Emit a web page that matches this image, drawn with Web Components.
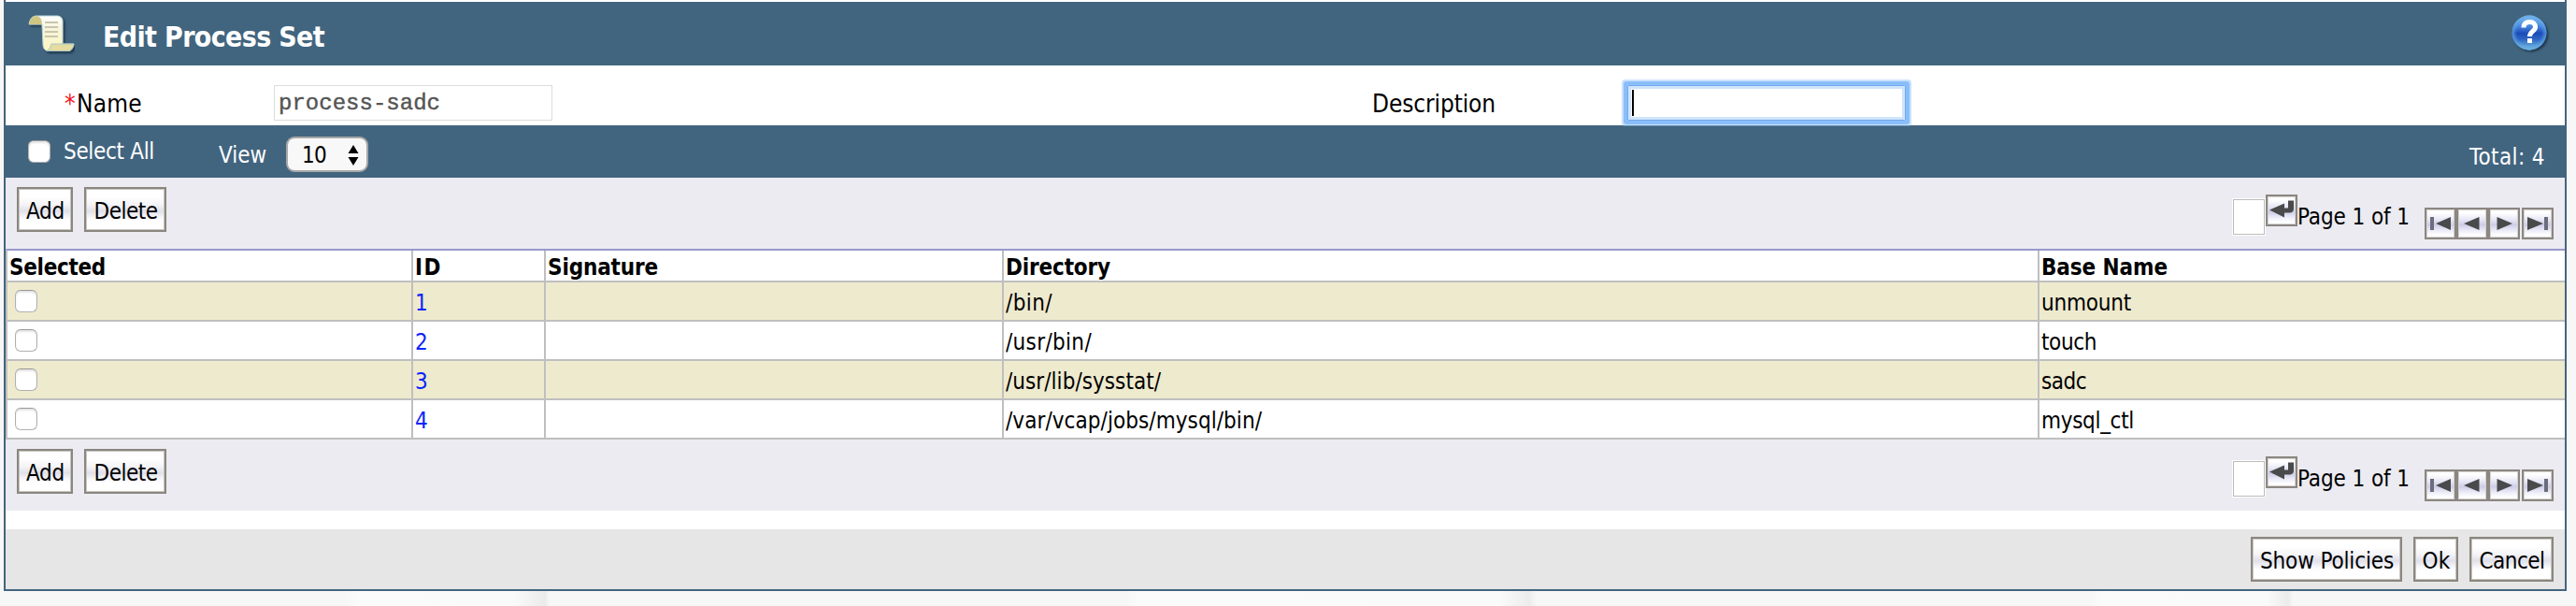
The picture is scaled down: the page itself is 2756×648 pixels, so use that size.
<!DOCTYPE html>
<html lang="en"><head><meta charset="utf-8"><title>Edit Process Set</title>
<style>
body{margin:0;width:2756px;height:648px;overflow:hidden;background:#f8f8f8}
</style></head><body>
<process-set-page></process-set-page>
<script>
const define=(name,html,after)=>customElements.define(name,class extends HTMLElement{
  constructor(){super();this.attachShadow({mode:'open'});}
  connectedCallback(){
    const t=document.createElement('template');
    t.innerHTML=typeof html==='function'?html(this):html;
    this.shadowRoot.replaceChildren(t.content.cloneNode(true));
    if(after)after(this);
  }
});

/* Text run whose tracking is adjusted so that it fills the width in "w". */
define('fit-text','<style>:host{display:inline-block;white-space:nowrap;flex:none}</style><span><slot></slot></span>',el=>{
  const w=+el.getAttribute('w'),s=el.shadowRoot.querySelector('span');
  if(!w)return;
  const natural=s.getBoundingClientRect().width,n=el.textContent.length;
  s.style.letterSpacing=((w-natural)/n).toFixed(3)+'px';
  el.style.width=w+'px';
});

define('push-button',el=>`<style>
:host{display:flex;box-sizing:border-box;height:48px;width:${el.getAttribute('width')}px;flex:none;border:2px solid #8b8680;
box-shadow:inset 0 0 0 1px #c8c6c0;justify-content:center;align-items:center;color:#000;padding:3px 0 0 1px;
background:linear-gradient(#fff 20%,#f4f4f8 38%,#e0e0e9 54%,#fbfbfd 72%,#fff 80%)}
</style><slot></slot>`);

define('check-box',`<style>:host{display:block;flex:none;box-sizing:border-box;width:24px;height:24px;border-radius:6px;border:1px solid #b0b0b0;border-top-color:#999;background:#fff;box-shadow:inset 0 2px 2px #e4e4e4}</style>`);

const glyphs={
 enter:'<path d="M4 16.500 20 9.500v5h4V6.500h6V15q0 4-4 4.500H20v5z"/>',
 first:'<path fill="#6c6c7c" d="M6 10h4v14H6z"/><path d="M12 17 28 10v14z"/>',
 prev:'<path d="M8 17 24.500 10v14z"/>',
 next:'<path d="M26 17 9.500 10v14z"/>',
 last:'<path d="M23 17 6 10v14z"/><path fill="#6c6c7c" d="M24 10h4v14h-4z"/>'
};
define('icon-button',el=>`<style>
:host{display:block;flex:none;box-sizing:border-box;width:34px;height:34px;border:2px solid #8b8680;box-shadow:inset 0 0 0 1px #d5d2d2;
background:linear-gradient(#fff 12%,#e8e8f6 35%,#cdcde8 55%,#f0f0fa 78%,#fff 92%)}
svg{display:block;margin:-2px;filter:blur(.5px)}
</style><svg width="34" height="34" fill="#4a4a4c">${glyphs[el.getAttribute('icon')]}</svg>`);

define('list-toolbar',`<style>
:host{display:flex;box-sizing:border-box;height:76px;background:#ebebf1;padding:10px 12px 0;font-size:24px;justify-content:space-between}
.l,.r,.p{display:flex}.l{gap:12px}
.in{box-sizing:border-box;width:36px;height:40px;border:1px solid #fff;margin:12px 0 0;padding:0}
.in i{display:block;box-sizing:border-box;width:34px;height:38px;border:1px solid #bbb;background:#fff}
.e{margin-top:8px}.t{margin:16px 16px 0 0;line-height:32px;height:32px}.p{margin-top:22px}
.p :last-child{margin-left:2px}
</style>
<div class="l"><push-button width="60"><fit-text w="41">Add</fit-text></push-button><push-button width="88"><fit-text w="68">Delete</fit-text></push-button></div>
<div class="r"><div class="in"><i></i></div><icon-button class="e" icon="enter"></icon-button><fit-text class="t" w="120">Page 1 of 1</fit-text>
<div class="p"><icon-button icon="first"></icon-button><icon-button icon="prev"></icon-button><icon-button icon="next"></icon-button><icon-button icon="last"></icon-button></div></div>`);

define('title-bar',`<style>
:host{display:flex;height:68px;background:#42657f;align-items:flex-start;color:#fff;font-weight:bold;font-size:30px}
.s{margin:10px 0 0 20px}.h{margin:10px 14px 0 auto}
.t{margin:18px 0 0 30px;line-height:40px}
</style>
<svg class="s" width="54" height="48" viewBox="0 0 54 48"><defs><linearGradient id="a" x2="0" y2="1"><stop stop-color="#fff"/><stop offset=".35" stop-color="#f7f4dc"/><stop offset="1" stop-color="#fdf7c0"/></linearGradient>
<filter id="b" x="-20%" y="-20%" width="150%" height="150%"><feGaussianBlur stdDeviation=".5"/><feDropShadow dx="2" dy="2" stdDeviation="1.2" flood-color="#152c3e" flood-opacity=".75"/></filter></defs>
<g filter="url(#b)"><path d="M12 5h24q5 1 5 6v24h12q-1 6-5 7.500H25q-5-1-5-7L19 14H5q1-8 7-9z" fill="url(#a)" stroke="#b9d4d6"/>
<path d="M5 14q1-8 7-9 7 0 7 9z" fill="#cfc684"/><path d="M29 35h24q-1 6-5 7.500H24q4-2 5-7.500z" fill="#e6dba0" stroke="#a9c8c4"/>
<path d="M22 12h14M22 17h14M22 22h14M22 27h14" stroke="#c9c5ae" stroke-width="2"/></g></svg>
<fit-text class="t" w="237">Edit Process Set</fit-text>
<svg class="h" width="44" height="48" viewBox="0 0 44 48"><defs><linearGradient id="e" x2="0" y2="1"><stop stop-color="#84c4f2"/><stop offset=".3" stop-color="#4a8ae0"/><stop offset=".52" stop-color="#1c4ab8"/><stop offset=".7" stop-color="#2f68c6"/><stop offset="1" stop-color="#7cc4e0"/></linearGradient>
<radialGradient id="g"><stop offset=".7" stop-color="#62a8e6" stop-opacity="0"/><stop offset="1" stop-color="#62a8e6" stop-opacity=".8"/></radialGradient>
<filter id="d" x="-20%" y="-20%" width="150%" height="150%"><feGaussianBlur stdDeviation=".5"/><feDropShadow dx="2" dy="2" stdDeviation="1" flood-color="#152c3e" flood-opacity=".8"/></filter></defs>
<circle cx="20" cy="23" r="18.500" fill="url(#e)" filter="url(#d)"/><circle cx="20" cy="23" r="18.500" fill="url(#g)"/>
<path d="M14 17.500c0-4 2.500-6 6.500-6s6 2.500 6 5.500c0 4.500-6 4.500-6 10" fill="none" stroke="#fff" stroke-width="5"/><path d="M18 29h5v5h-5z" fill="#fff"/></svg>`);

define('detail-form',`<style>
:host{display:grid;grid-template-columns:63px 224px 1175px 273px 298px;height:64px;background:#fff;font-size:26px;line-height:36px}
.a{grid-column:2;padding-top:23px}
.n,.d{box-sizing:border-box;height:38px;margin-top:21px;border:1px solid #dcdcdc;width:298px}
.n{font:24px/34px "Liberation Mono",monospace;-webkit-text-stroke:.4px #545454;color:#545454;padding:2px 0 0 4px}
.l{padding-top:23px}
.d{position:relative;z-index:1;border-color:#72aaea;box-shadow:inset 0 0 0 3px #cfe4fc,0 0 0 4px #89befb,0 0 0 6px rgba(137,190,251,.45);border-radius:1px;padding:4px 0 0 4px}
.d i{display:block;width:2px;height:28px;background:#000}
</style>
<div class="a"><fit-text w="13" style="color:#f01020">*</fit-text><fit-text w="70">Name</fit-text></div>
<div class="n"><fit-text w="173">process-sadc</fit-text></div>
<div class="l"><fit-text w="132">Description</fit-text></div>
<div class="d"><i></i></div>`);

define('view-bar',`<style>
:host{display:flex;height:56px;box-sizing:border-box;background:#42657f;color:#fff;font-size:24px;line-height:32px;padding:0 21px 0 24px}
check-box{margin-top:16px}.a{margin:12px 0 0 14px}.v{margin:16px 0 0 69px}
.s{box-sizing:border-box;width:88px;height:38px;margin:12px 0 0 21px;border:2px solid #a8a8a8;border-radius:9px;background:#f8f8f8;color:#000;display:flex;align-items:center;padding:1px 8px 0 15px;justify-content:space-between}
.t{margin:18px 0 0 auto}
</style>
<check-box></check-box><fit-text class="a" w="97">Select All</fit-text><fit-text class="v" w="51">View</fit-text>
<div class="s"><fit-text w="26">10</fit-text><svg width="12" height="24"><path d="M6 1l5.500 9H.5zM6 23l5.500-9H.5z"/></svg></div>
<fit-text class="t" w="81">Total: 4</fit-text>`);

const cols=[['Selected',103],['ID',29],['Signature',118],['Directory',112],['Base Name',135]];
const rows=[['1','/bin/',50,'unmount',96],['2','/usr/bin/',92,'touch',59],['3','/usr/lib/sysstat/',166,'sadc',48],['4','/var/vcap/jobs/mysql/bin/',274,'mysql_ctl',99]];
define('process-table',`<style>
:host{display:block;font-size:24px}
.r{display:grid;grid-template-columns:434px 142px 490px 1108px 1fr;height:40px;border-bottom:2px solid #bfbfbf;border-left:2px solid #bfbfbf;background:#fff}
.r>div{border-right:2px solid #bfbfbf;padding-left:2px;line-height:44px;height:40px}
.r>div:last-child{border-right:0}
.r.h{height:32px;font-weight:bold;border-top:2px solid #9999cc}
.r.h>div{line-height:36px;height:32px}
.r.o{background:#eeeace}.id{color:#0b24fb}
check-box{margin:8px 0 0 6px}
</style>
<div class="r h">${cols.map(c=>`<div><fit-text w="${c[1]}">${c[0]}</fit-text></div>`).join('')}</div>
${rows.map((r,i)=>`<div class="r ${i%2?'':'o'}"><div><check-box></check-box></div><div class="id"><fit-text w="14">${r[0]}</fit-text></div><div></div><div><fit-text w="${r[2]}">${r[1]}</fit-text></div><div><fit-text w="${r[4]}">${r[3]}</fit-text></div></div>`).join('')}`);

define('action-bar',`<style>
:host{display:flex;justify-content:flex-end;gap:12px;height:64px;box-sizing:border-box;padding:8px 12px 0;background:#e6e6e6;font-size:24px}
</style><push-button width="162"><fit-text w="143">Show Policies</fit-text></push-button><push-button width="48"><fit-text w="30">Ok</fit-text></push-button><push-button width="90"><fit-text w="70">Cancel</fit-text></push-button>`);

define('process-set-page',`<style>
:host{display:block;width:2756px;height:648px;font-family:"DejaVu Sans Condensed","DejaVu Sans",sans-serif;font-stretch:condensed;
background:linear-gradient(90deg,#f7f7f7 370px,#fbfbfb 385px,#fafafa 550px,#ebebeb 583px,#f7f7f7 588px,#f7f7f7 1205px,#fbfbfb 1218px,#fafafa 1605px,#ececec 1636px,#f7f7f7 1644px,#f7f7f7 2236px,#fbfbfb 2250px,#fafafa 2425px,#ebebeb 2448px,#f7f7f7 2453px)}
.f{margin-left:4px;width:2738px;border:2px solid #42657f;border-top:0;padding-top:2px;background:#fff}
.g{height:20px}
</style>
<div class="f"><title-bar></title-bar><detail-form></detail-form><view-bar></view-bar><list-toolbar></list-toolbar><process-table></process-table><list-toolbar></list-toolbar><div class="g"></div><action-bar></action-bar></div>`);
</script></body></html>
